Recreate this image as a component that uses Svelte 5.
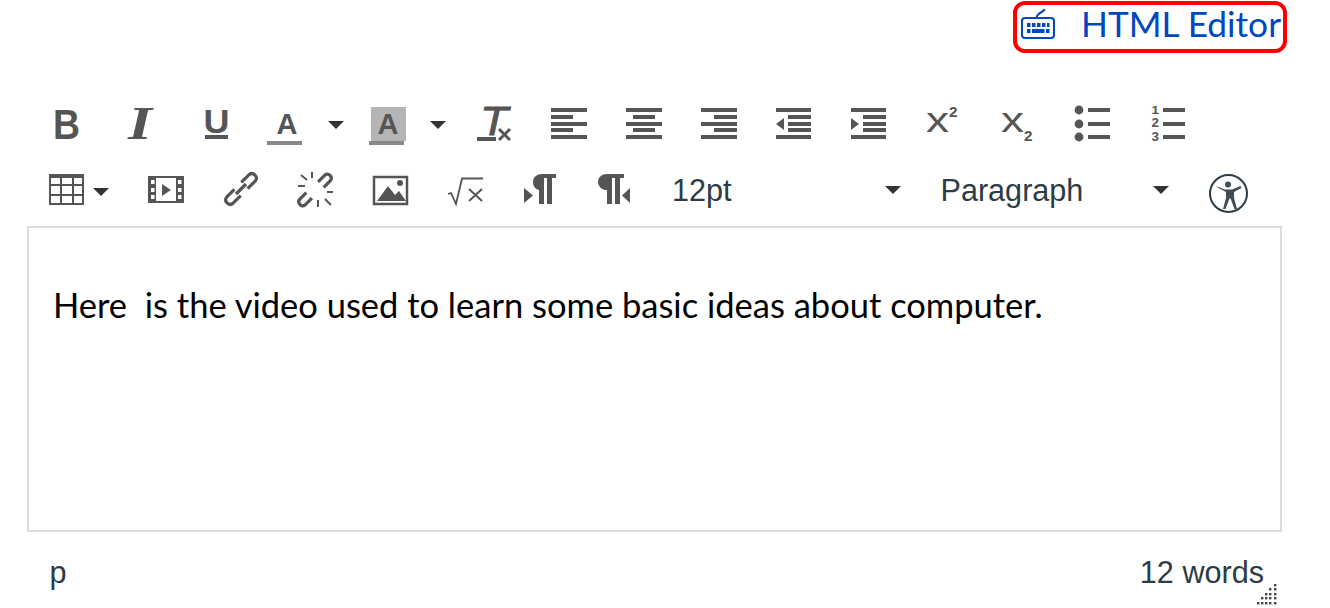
<script>
  // 工具栏图标都用页面绝对坐标写 viewBox,方便和参考图对照
  const gripDots = [
    [1274, 584],
    [1269, 588], [1274, 588],
    [1265, 593], [1269, 593], [1274, 593],
    [1261, 597], [1265, 597], [1269, 597], [1274, 597],
    [1257, 602], [1261, 602], [1265, 602], [1269, 602], [1274, 602],
  ];
  const tableLines = [61, 73];
</script>

<div class="page">
  <header class="top">
    <a class="html-link" href="#html">
      <svg class="kbd" width="36" height="32" viewBox="1020 9 36 32" aria-hidden="true">
        <rect x="1022" y="18" width="32" height="20" rx="3" fill="none" stroke="currentColor" stroke-width="2" />
        <path d="M1036 18c1-3 2-4 4-5s4-2 4.500-4" fill="none" stroke="currentColor" stroke-width="2" />
        <path d="M1027 23h3.500v4h-3.500zM1032 23h3.500v4h-3.500zM1037 23h3.500v4h-3.500zM1042 23h3.500v4h-3.500zM1047 23h2.500v4h-2.500zM1027 29h3.500v4h-3.500zM1032 29h12.500v4h-12.500zM1046 29h3.500v4h-3.500z" fill="currentColor" />
      </svg>
      <span>HTML Editor</span>
    </a>
  </header>

  <div class="toolbar">
    <div class="row first">
      <button class="b75" aria-label="Bold">
        <svg width="75" height="44" viewBox="28 103 75 44">
          <text x="53" y="139" class="ico bold" font-size="43" textLength="27" lengthAdjust="spacingAndGlyphs">B</text>
        </svg>
      </button>
      <button class="b75" aria-label="Italic">
        <svg width="75" height="44" viewBox="103 103 75 44">
          <text x="128" y="139" class="ico serif" font-size="47" textLength="24" lengthAdjust="spacingAndGlyphs">I</text>
        </svg>
      </button>
      <button class="b75" aria-label="Underline">
        <svg width="75" height="44" viewBox="178 103 75 44">
          <text x="203.500" y="133" class="ico bold" font-size="34" textLength="26" lengthAdjust="spacingAndGlyphs">U</text>
          <rect x="205" y="135" width="23" height="4" fill="#555" />
        </svg>
      </button>
      <button class="b103" aria-label="Text color">
        <svg width="103" height="44" viewBox="253 103 103 44">
          <text x="276.500" y="134" class="ico bold" font-size="29">A</text>
          <rect x="267" y="141" width="35" height="4" fill="#888" />
          <path d="M328 121h16l-8 8z" fill="#333" />
        </svg>
      </button>
      <button class="b102" aria-label="Background color">
        <svg width="102" height="44" viewBox="356 103 102 44">
          <rect x="371" y="107" width="35" height="34" fill="#b5b5b5" />
          <text x="377.500" y="134" class="ico bold" font-size="29">A</text>
          <rect x="369" y="141" width="35" height="4" fill="#888" />
          <path d="M430 121h16l-8 8z" fill="#333" />
        </svg>
      </button>
      <button class="b75" aria-label="Clear formatting">
        <svg width="75" height="44" viewBox="458 103 75 44">
          <text x="480" y="135" class="ico italic clear-t" font-size="40" textLength="28" lengthAdjust="spacingAndGlyphs">T</text>
          <rect x="477" y="137" width="19" height="4" fill="#555" />
          <path d="M499 129l11 11m0-11l-11 11" stroke="#555" stroke-width="3" fill="none" />
        </svg>
      </button>
      <button class="b75" aria-label="Align left">
        <svg width="75" height="44" viewBox="533 103 75 44">
          <path d="M551 108h36v4h-36zM551 115h22v4h-22zM551 122h36v4h-36zM551 128h22v4h-22zM551 135h36v4h-36z" fill="#555" />
        </svg>
      </button>
      <button class="b75" aria-label="Align center">
        <svg width="75" height="44" viewBox="608 103 75 44">
          <path d="M626 108h36v4h-36zM633 115h22v4h-22zM626 122h36v4h-36zM633 128h22v4h-22zM626 135h36v4h-36z" fill="#555" />
        </svg>
      </button>
      <button class="b75" aria-label="Align right">
        <svg width="75" height="44" viewBox="683 103 75 44">
          <path d="M701 108h36v4h-36zM714 115h23v4h-23zM701 122h36v4h-36zM714 128h23v4h-23zM701 135h36v4h-36z" fill="#555" />
        </svg>
      </button>
      <button class="b75" aria-label="Outdent">
        <svg width="75" height="44" viewBox="758 103 75 44">
          <path d="M776 108h35v4h-35zM788 115h23v4h-23zM788 122h23v4h-23zM788 128h23v4h-23zM776 135h35v4h-35zM784 118v12l-8-6z" fill="#555" />
        </svg>
      </button>
      <button class="b75" aria-label="Indent">
        <svg width="75" height="44" viewBox="833 103 75 44">
          <path d="M851 108h35v4h-35zM863 115h23v4h-23zM863 122h23v4h-23zM863 128h23v4h-23zM851 135h35v4h-35zM851 118v12l8-6z" fill="#555" />
        </svg>
      </button>
      <button class="b75" aria-label="Superscript">
        <svg width="75" height="44" viewBox="908 103 75 44">
          <text x="926" y="132" class="ico" font-size="35" textLength="23" lengthAdjust="spacingAndGlyphs">x</text>
          <text x="949" y="117" class="ico bold" font-size="14" textLength="8.500" lengthAdjust="spacingAndGlyphs">2</text>
        </svg>
      </button>
      <button class="b75" aria-label="Subscript">
        <svg width="75" height="44" viewBox="983 103 75 44">
          <text x="1001" y="132" class="ico" font-size="35" textLength="23" lengthAdjust="spacingAndGlyphs">x</text>
          <text x="1024" y="141" class="ico bold" font-size="14" textLength="8.500" lengthAdjust="spacingAndGlyphs">2</text>
        </svg>
      </button>
      <button class="b75" aria-label="Bullet list">
        <svg width="75" height="44" viewBox="1058 103 75 44">
          <circle cx="1079" cy="110" r="4.400" fill="#555" />
          <circle cx="1079" cy="124" r="4.400" fill="#555" />
          <circle cx="1079" cy="137" r="4.400" fill="#555" />
          <path d="M1088 108h22v4h-22zM1088 122h22v4h-22zM1088 135h22v4h-22z" fill="#555" />
        </svg>
      </button>
      <button class="b75" aria-label="Numbered list">
        <svg width="75" height="44" viewBox="1133 103 75 44">
          <text x="1151.500" y="114" class="ico bold" font-size="11" textLength="7.500" lengthAdjust="spacingAndGlyphs">1</text>
          <text x="1151.500" y="127" class="ico bold" font-size="12" textLength="7.500" lengthAdjust="spacingAndGlyphs">2</text>
          <text x="1151.500" y="141" class="ico bold" font-size="13" textLength="7.500" lengthAdjust="spacingAndGlyphs">3</text>
          <path d="M1163 108h22v4h-22zM1163 122h22v4h-22zM1163 135h22v4h-22z" fill="#555" />
        </svg>
      </button>
    </div>

    <div class="row second">
      <button class="b100" aria-label="Table">
        <svg width="100" height="40" viewBox="28 170 100 40">
          <rect x="49" y="174" width="35" height="4" fill="#555" />
          <rect x="50" y="175" width="33" height="29" fill="none" stroke="#555" stroke-width="2" />
          {#each tableLines as x}
            <path d="M{x} 175v30" stroke="#555" stroke-width="2" />
          {/each}
          <path d="M50 185h34M50 195h34" stroke="#555" stroke-width="2" />
          <path d="M93 188h16l-8 8z" fill="#333" />
        </svg>
      </button>
      <button class="b75" aria-label="Embed media">
        <svg width="75" height="40" viewBox="128 170 75 40">
          <rect x="149" y="177" width="34" height="25" fill="none" stroke="#555" stroke-width="2" />
          <path d="M149 177h7v25h-7zM176 177h7v25h-7z" fill="#555" />
          <path d="M151 180h3.500v4h-3.500zM151 188h3.500v4h-3.500zM151 195h3.500v4h-3.500zM178 180h3.500v4h-3.500zM178 188h3.500v4h-3.500zM178 195h3.500v4h-3.500z" fill="#fff" />
          <path d="M162 184l9 6-9 6z" fill="#555" />
        </svg>
      </button>
      <button class="b75" aria-label="Link">
        <svg width="75" height="40" viewBox="203 170 75 40">
          <g fill="none" stroke="#555" stroke-width="3.200">
            <path d="M241.300 182.400L249.100 174.600A4.500 4.500 0 0 1 255.400 180.900L247.600 188.700" />
            <path d="M240.700 195.600L232.900 203.400A4.500 4.500 0 0 1 226.600 197.100L234.400 189.300" />
            <path d="M236 194L246 184" />
          </g>
        </svg>
      </button>
      <button class="b75" aria-label="Unlink">
        <svg width="75" height="40" viewBox="278 170 75 40">
          <g fill="none" stroke="#555" stroke-width="3.200">
            <path d="M318.100 181.800L324.800 175.100A4 4 0 0 1 330.400 180.700L323.700 187.400" />
            <path d="M311.900 198.200L305.200 204.900A4 4 0 0 1 299.600 199.300L306.300 192.600" />
          </g>
          <path d="M301 175l6 5M312 172v6M298 186h7M327 192h6M318 200v7M325 199l6 6" stroke="#555" stroke-width="2" fill="none" />
        </svg>
      </button>
      <button class="b75" aria-label="Image">
        <svg width="75" height="40" viewBox="353 170 75 40">
          <rect x="374" y="177" width="33" height="27" fill="none" stroke="#555" stroke-width="2.500" />
          <circle cx="400" cy="183" r="3" fill="#555" />
          <path d="M377 201l11-15 7 9 4-4 7 10z" fill="#555" />
        </svg>
      </button>
      <button class="b75" aria-label="Equation">
        <svg width="75" height="40" viewBox="428 170 75 40">
          <path d="M448 194l3-1 5 11 6-25.500h21" fill="none" stroke="#555" stroke-width="1.800" />
          <path d="M469 189l13 12m0-12l-13 12" fill="none" stroke="#555" stroke-width="2" />
        </svg>
      </button>
      <button class="b75" aria-label="Left to right">
        <svg width="75" height="40" viewBox="503 170 75 40">
          <path d="M556 174v4h-4v26h-5v-26h-3v26h-5v-14a8 8 0 0 1-6-8c0-5 4-8 9-8z" fill="#555" />
          <path d="M524 188l9 7.500-9 7.500z" fill="#555" />
        </svg>
      </button>
      <button class="b75" aria-label="Right to left">
        <svg width="75" height="40" viewBox="578 170 75 40">
          <path d="M624 174v4h-4v26h-5v-26h-3v26h-5v-14a8 8 0 0 1-9-8c0-5 4-8 9-8z" fill="#555" />
          <path d="M630 188l-8 7.500 8 7.500z" fill="#555" />
        </svg>
      </button>
      <div class="select size">
        <span>12pt</span>
        <svg width="16" height="8" viewBox="0 0 16 8"><path d="M0 0h16l-8 8z" fill="#333" /></svg>
      </div>
      <div class="select block">
        <span>Paragraph</span>
        <svg width="16" height="8" viewBox="0 0 16 8"><path d="M0 0h16l-8 8z" fill="#333" /></svg>
      </div>
      <button class="b75" aria-label="Accessibility">
        <svg width="75" height="50" viewBox="1183 170 75 50">
          <circle cx="1228.500" cy="193.500" r="18.500" fill="none" stroke="#2d3b45" stroke-width="2" />
          <circle cx="1228" cy="184.500" r="3" fill="#404b52" />
          <path d="M1216 186l8.500 3.500h7.500l8.500-3.500 1 2-7.500 4v6l3 11h-2.500l-4-10.500h-1l-4 10.500h-2.500l3-11v-6l-7.500-4z" fill="#404b52" />
        </svg>
      </button>
    </div>
  </div>

  <div class="editor">
    <p>Here&nbsp; is the video used to learn some basic ideas about computer.</p>
  </div>

  <footer class="status">
    <span>p</span>
    <span>12 words</span>
    <svg class="grip" width="24" height="24" viewBox="1255 582 24 24" aria-hidden="true">
      {#each gripDots as [x, y]}
        <rect {x} {y} width="2.400" height="2.400" fill="#444" />
      {/each}
    </svg>
  </footer>
</div>

<style>
  :global(body) {
    margin: 0;
    background: #fff;
  }
  .page {
    position: relative;
    width: 1330px;
    height: 608px;
    overflow: hidden;
    font-family: "Liberation Sans", Arial, sans-serif;
    color: #2d3b45;
  }
  .top {
    display: flex;
    justify-content: flex-end;
    height: 90px;
    padding: 1px 43px 0 0;
    box-sizing: border-box;
  }
  .html-link {
    display: flex;
    align-items: center;
    box-sizing: border-box;
    width: 274px;
    height: 52px;
    padding: 0 0 7px 3px;
    border: 4px solid #f00;
    border-radius: 12px;
    color: #0047c0;
    font-family: Lato, sans-serif;
    font-size: 35.300px;
    text-decoration: none;
    white-space: nowrap;
  }
  .html-link .kbd {
    margin: 3px 25px 0 0;
    flex: none;
  }
  .toolbar {
    padding-left: 28px;
  }
  .row {
    display: flex;
    align-items: flex-start;
  }
  .first {
    height: 66px;
    padding-top: 13px;
    box-sizing: border-box;
  }
  .second {
    height: 70px;
    padding-top: 14px;
    box-sizing: border-box;
  }
  button {
    display: block;
    flex: none;
    padding: 0;
    border: 0;
    background: none;
  }
  svg {
    display: block;
    overflow: visible;
  }
  .b75 { width: 75px; }
  .b100 { width: 100px; }
  .b102 { width: 102px; }
  .b103 { width: 103px; }
  .ico {
    font-family: "Liberation Sans", sans-serif;
    fill: #555;
  }
  .bold {
    font-weight: 700;
  }
  .serif {
    font-family: "Liberation Serif", serif;
    font-style: italic;
    font-weight: 700;
  }
  .italic {
    font-style: italic;
  }
  .clear-t {
    stroke: #555;
    stroke-width: 0.8px;
  }
  .select {
    display: flex;
    align-items: center;
    justify-content: space-between;
    flex: none;
    box-sizing: border-box;
    height: 40px;
    padding-right: 14px;
    font-size: 30.600px;
    white-space: nowrap;
  }
  .size {
    width: 262px;
    padding-left: 19px;
  }
  .block {
    width: 268px;
    padding-left: 25.500px;
  }
  .editor {
    box-sizing: border-box;
    width: 1255px;
    height: 306px;
    margin-left: 27px;
    padding: 55px 24px 0;
    border: 2px solid #dcdcdc;
    color: #000;
    font-family: Lato, sans-serif;
    font-size: 34.500px;
    line-height: 44px;
  }
  .editor p {
    margin: 0;
  }
  .status {
    display: flex;
    justify-content: space-between;
    width: 1255px;
    margin-left: 27px;
    box-sizing: border-box;
    padding: 22px 18px 0 22.500px;
    font-size: 30.600px;
    line-height: 36px;
  }
  .grip {
    position: absolute;
    left: 1255px;
    top: 582px;
  }
</style>
